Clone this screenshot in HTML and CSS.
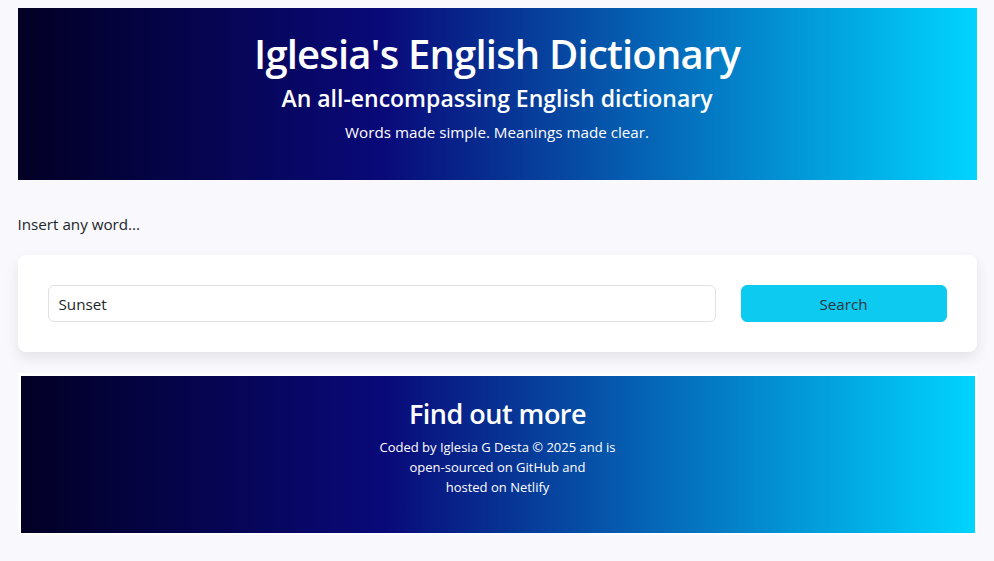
FILE: index.html
```html
<!DOCTYPE html>
<html lang="en">
<head>
<meta charset="utf-8">
<title>Iglesia's English Dictionary</title>
<link rel="stylesheet" href="styles.css">
</head>
<body>
<div class="container">
  <header class="hero">
    <h1 class="hero-title">Iglesia's English Dictionary</h1>
    <h2 class="hero-sub">An all-encompassing English dictionary</h2>
    <p class="hero-tag">Words made simple. Meanings made clear.</p>
  </header>
  <p class="prompt">Insert any word...</p>
  <section class="card">
    <form class="search-row">
      <input class="search-input" type="text" value="Sunset">
      <button class="search-btn" type="button">Search</button>
    </form>
  </section>
  <footer class="footer">
    <div class="footer-inner">
      <h3 class="footer-title">Find out more</h3>
      <p class="footer-text">Coded by <a href="#">Iglesia G Desta</a> © 2025 and is<br>open-sourced on <a href="#">GitHub</a> and<br>hosted on <a href="#">Netlify</a></p>
    </div>
  </footer>
</div>
</body>
</html>
```
FILE: styles.css
```css
* { box-sizing: border-box; }
body {
  margin: 0;
  padding-top: 8px;
  background: #f8f8fd;
  font-family: "Open Sans", "Noto Sans", sans-serif;
  color: #212529;
}
.container {
  width: 959px;
  margin: 0 auto;
}
.hero {
  height: 172px;
  background: linear-gradient(90deg, rgb(2,0,36) 0%, rgb(9,9,121) 38%, rgb(0,212,255) 100%);
  color: #fff;
  text-align: center;
  padding-top: 21px;
}
.hero-title {
  margin: 0;
  font-size: 40px;
  font-weight: 600;
  line-height: 50px;
  letter-spacing: -0.8px;
}
.hero-sub {
  margin: 0;
  font-size: 23px;
  font-weight: 600;
  line-height: 34px;
  margin-top: 2px;
}
.hero-tag {
  margin: 5px 0 0;
  font-size: 15.2px;
  line-height: 24px;
}
.prompt {
  margin: 0;
  padding-top: 32px;
  height: 75px;
  font-size: 15.2px;
  line-height: 24px;
}
.card {
  background: #fff;
  border-radius: 8px;
  box-shadow: 0 6px 14px rgba(0,0,0,0.09);
  padding: 30px;
}
.search-row {
  display: flex;
  gap: 25px;
  margin: 0;
}
.search-input {
  flex: 1;
  height: 37px;
  border: 1px solid #dee2e6;
  border-radius: 6px;
  padding: 0 10px;
  font-family: inherit;
  font-size: 15.2px;
  color: #212529;
}
.search-btn {
  width: 206px;
  height: 37px;
  background: #0dcaf0;
  border: 1px solid #0dcaf0;
  border-radius: 6px;
  font-family: inherit;
  font-size: 15.2px;
  color: #2b3440;
}
.footer {
  margin-top: 21px;
  background: #fff;
  padding: 3px 2px 2px 3px;
}
.footer-inner {
  height: 157px;
  background: linear-gradient(90deg, rgb(2,0,36) 0%, rgb(9,9,121) 38%, rgb(0,212,255) 100%);
  color: #fff;
  text-align: center;
  padding-top: 20px;
}
.footer-title {
  margin: 0;
  font-size: 27px;
  font-weight: 600;
  line-height: 36px;
  letter-spacing: -0.5px;
}
.footer-text {
  margin: 5px 0 0;
  font-size: 13px;
  line-height: 20px;
}
.footer-text a {
  color: #fff;
  text-decoration: none;
}
```
